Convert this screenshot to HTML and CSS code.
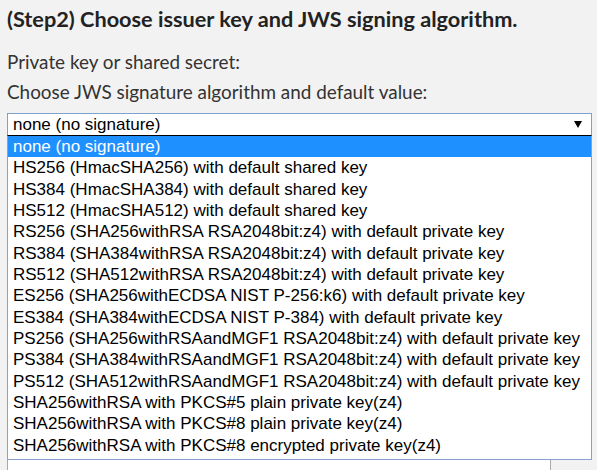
FILE: index.html
```html
<!DOCTYPE html>
<html>
<head>
<meta charset="utf-8">
<link rel="stylesheet" href="styles.css">
</head>
<body>
<div class="page">
  <h2 class="title">(Step2) Choose issuer key and JWS signing algorithm.</h2>
  <p class="label first">Private key or shared secret:</p>
  <p class="label">Choose JWS signature algorithm and default value:</p>
  <div class="field">
    <div class="select">
      <span class="select-value">none (no signature)</span>
      <span class="arrow"></span>
    </div>
    <ul class="options">
      <li class="opt selected">none (no signature)</li>
      <li class="opt">HS256 (HmacSHA256) with default shared key</li>
      <li class="opt">HS384 (HmacSHA384) with default shared key</li>
      <li class="opt">HS512 (HmacSHA512) with default shared key</li>
      <li class="opt">RS256 (SHA256withRSA RSA2048bit:z4) with default private key</li>
      <li class="opt">RS384 (SHA384withRSA RSA2048bit:z4) with default private key</li>
      <li class="opt">RS512 (SHA512withRSA RSA2048bit:z4) with default private key</li>
      <li class="opt">ES256 (SHA256withECDSA NIST P-256:k6) with default private key</li>
      <li class="opt">ES384 (SHA384withECDSA NIST P-384) with default private key</li>
      <li class="opt">PS256 (SHA256withRSAandMGF1 RSA2048bit:z4) with default private key</li>
      <li class="opt">PS384 (SHA384withRSAandMGF1 RSA2048bit:z4) with default private key</li>
      <li class="opt">PS512 (SHA512withRSAandMGF1 RSA2048bit:z4) with default private key</li>
      <li class="opt">SHA256withRSA with PKCS#5 plain private key(z4)</li>
      <li class="opt">SHA256withRSA with PKCS#8 plain private key(z4)</li>
      <li class="opt">SHA256withRSA with PKCS#8 encrypted private key(z4)</li>
    </ul>
  </div>
  <div class="textarea"></div>
</div>
</body>
</html>
```
FILE: styles.css
```css
html, body {
  margin: 0;
  padding: 0;
  background: #f2f2f2;
  overflow: hidden;
  height: 470px;
}
.page {
  padding: 0 5px 0 7px;
  height: 470px;
  overflow: hidden;
}
.title {
  margin: 0;
  padding-top: 5px;
  font-family: Lato, "Open Sans", sans-serif;
  font-weight: 700;
  font-size: 21.7px;
  line-height: 28px;
  color: #222;
}
.label {
  margin: 0;
  font-family: Lato, "Open Sans", sans-serif;
  font-size: 18.9px;
  line-height: 30px;
  color: #333;
}
.label.first {
  margin-top: 14px;
}
.field {
  position: relative;
  margin-top: 6px;
  width: 585px;
}
.select {
  box-sizing: border-box;
  height: 23px;
  border: 1px solid #7da2ce;
  border-bottom-color: #000;
  background: #fff;
  display: flex;
  align-items: center;
  justify-content: space-between;
  padding: 0 9px 0 5px;
  font-family: "Liberation Sans", Arial, sans-serif;
  font-size: 17px;
  color: #000;
}
.arrow {
  width: 0;
  height: 0;
  border-left: 4px solid transparent;
  border-right: 4px solid transparent;
  border-top: 7px solid #000;
}
.options {
  position: absolute;
  left: 0;
  top: 23px;
  width: 585px;
  box-sizing: border-box;
  margin: 0;
  padding: 0 0 3px 0;
  list-style: none;
  background: #fff;
  border: 1px solid #8a9ecf;
  border-top: none;
  z-index: 2;
}
.opt {
  font-family: "Liberation Sans", Arial, sans-serif;
  font-size: 17px;
  line-height: 21.33px;
  height: 21.33px;
  padding-left: 5px;
  color: #000;
  white-space: nowrap;
}
.opt.selected {
  background: #1e90ff;
  color: #fff;
}
.textarea {
  margin-top: 10px;
  width: 542px;
  height: 400px;
  background: #fff;
  border: 1px solid #a9a9a9;
}
```
